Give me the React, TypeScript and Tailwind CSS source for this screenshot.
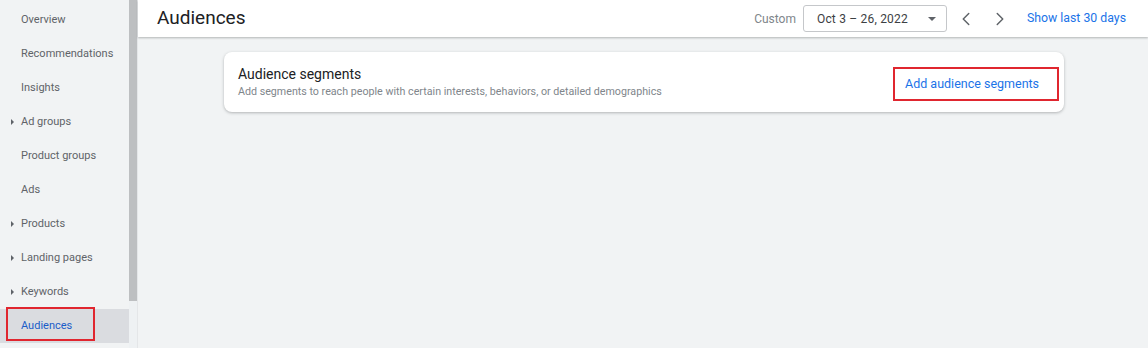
import { ChevronLeft, ChevronRight } from 'lucide-react';

const navItems: { label: string; arrow?: boolean; active?: boolean }[] = [
  { label: 'Overview' },
  { label: 'Recommendations' },
  { label: 'Insights' },
  { label: 'Ad groups', arrow: true },
  { label: 'Product groups' },
  { label: 'Ads' },
  { label: 'Products', arrow: true },
  { label: 'Landing pages', arrow: true },
  { label: 'Keywords', arrow: true },
  { label: 'Audiences', active: true },
];

export default function App() {
  return (
    <div className="flex h-[348px] w-[1148px] overflow-hidden bg-[#f1f3f4] font-['Roboto','Liberation_Sans',sans-serif]">
      {/* sidebar */}
      <div className="flex w-[129px] shrink-0 flex-col pt-[3px]">
        {navItems.map(item => (
          <div
            key={item.label}
            className={`relative flex h-[34px] shrink-0 items-center pl-[21px] text-[11px] ${
              item.active ? 'bg-[#dadce0] text-[#1a5cc8]' : 'text-[#5f6368]'
            }`}
          >
            {item.arrow && (
              <span className="absolute left-[11px] top-[14px] h-0 w-0 border-y-[3px] border-l-[3px] border-y-transparent border-l-[#5f6368]" />
            )}
            {item.active && (
              <span className="absolute left-[6px] top-[-2px] h-[34px] w-[89px] border-2 border-[#e0262f]" />
            )}
            {item.label}
          </div>
        ))}
      </div>

      {/* scrollbar */}
      <div className="flex w-[8px] shrink-0 flex-col">
        <div className="h-[301px] bg-[#bdbfc1]" />
        <div className="flex-1 bg-[#eef1f3]" />
      </div>

      {/* main */}
      <div className="flex flex-1 flex-col border-l border-[#e4e6e8]">
        <div className="relative z-10 flex h-[37px] shrink-0 items-center bg-white pl-[19px] pr-[22px] shadow-[0_1px_2px_rgba(60,64,67,0.35)]">
          <div className="text-[19px] text-[#202124]">Audiences</div>
          <div className="ml-auto flex items-center">
            <span className="mr-[7px] text-[12px] text-[#80868b]">Custom</span>
            <div className="flex h-[27px] w-[144px] items-center rounded-[3px] border border-[#c5c7ca] pl-[13px] pr-[10px] text-[12px] tracking-[0.2px] text-[#3c4043]">
              Oct 3 – 26, 2022
              <span className="ml-auto h-0 w-0 border-x-[4px] border-t-[4px] border-x-transparent border-t-[#5f6368]" />
            </div>
            <ChevronLeft className="ml-[8px] text-[#5f6368]" size={22} strokeWidth={1.6} />
            <ChevronRight className="ml-[12px] text-[#5f6368]" size={22} strokeWidth={1.6} />
            <span className="ml-[16px] text-[12.3px] text-[#1a73e8]">Show last 30 days</span>
          </div>
        </div>

        <div className="pl-[86px] pt-[15px]">
          <div className="flex h-[60px] w-[840px] items-center rounded-[8px] bg-white pl-[14px] pr-[5px] shadow-[0_1px_3px_rgba(60,64,67,0.35)]">
            <div className="flex flex-col pt-[1px]">
              <div className="text-[14px] leading-[18px] text-[#202124]">Audience segments</div>
              <div className="text-[10.7px] leading-[18px] text-[#80868b]">
                Add segments to reach people with certain interests, behaviors, or detailed demographics
              </div>
            </div>
            <div className="ml-auto mt-[4px] flex h-[34px] w-[166px] items-center border-2 border-[#e0262f] pl-[10px] text-[12.5px] text-[#1a73e8]">
              Add audience segments
            </div>
          </div>
        </div>
      </div>
    </div>
  );
}
